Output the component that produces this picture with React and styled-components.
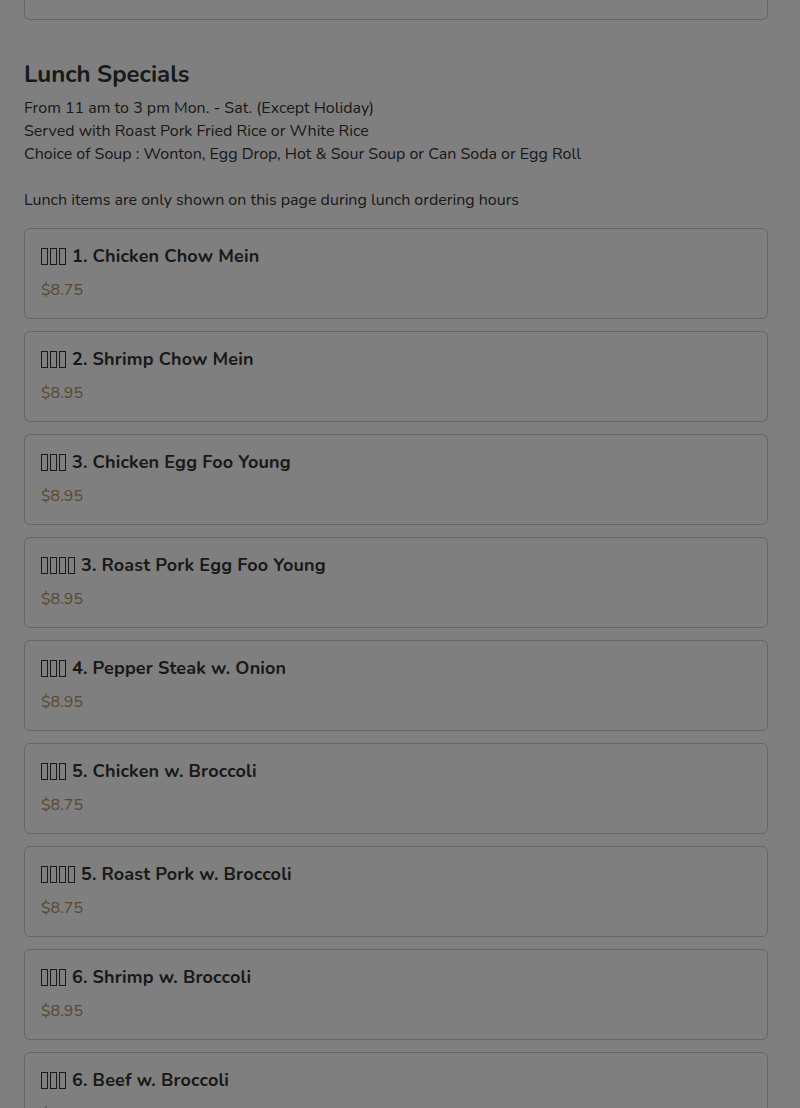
import React from "react";
import styled, { createGlobalStyle } from "styled-components";

const GlobalStyle = createGlobalStyle`
  html, body {
    margin: 0;
    padding: 0;
    background: #ffffff;
    font-family: "Nunito", "Lato", "Noto Sans", sans-serif;
    color: #333333;
  }
`;

const items = [
  { boxes: 3, name: "1. Chicken Chow Mein", price: "$8.75" },
  { boxes: 3, name: "2. Shrimp Chow Mein", price: "$8.95" },
  { boxes: 3, name: "3. Chicken Egg Foo Young", price: "$8.95" },
  { boxes: 4, name: "3. Roast Pork Egg Foo Young", price: "$8.95" },
  { boxes: 3, name: "4. Pepper Steak w. Onion", price: "$8.95" },
  { boxes: 3, name: "5. Chicken w. Broccoli", price: "$8.75" },
  { boxes: 4, name: "5. Roast Pork w. Broccoli", price: "$8.75" },
  { boxes: 3, name: "6. Shrimp w. Broccoli", price: "$8.95" },
  { boxes: 3, name: "6. Beef w. Broccoli", price: "$8.95" },
];

const App = () => {
  return (
    <>
      <GlobalStyle />
      <StyledPage>
        <PrevCard />
        <Section>
          <Heading>Lunch Specials</Heading>
          <Notes>
            From 11 am to 3 pm Mon. - Sat. (Except Holiday)
            <br />
            Served with Roast Pork Fried Rice or White Rice
            <br />
            Choice of Soup : Wonton, Egg Drop, Hot &amp; Sour Soup or Can Soda or
            Egg Roll
            <br />
            <br />
            Lunch items are only shown on this page during lunch ordering hours
          </Notes>
          <ItemList>
            {items.map((item, i) => (
              <ItemCard key={i}>
                <ItemName>
                  <Tofu>
                    {Array.from({ length: item.boxes }).map((_, j) => (
                      <TofuBox key={j} />
                    ))}
                  </Tofu>
                  {item.name}
                </ItemName>
                <Price>{item.price}</Price>
              </ItemCard>
            ))}
          </ItemList>
        </Section>
      </StyledPage>
      <Overlay />
    </>
  );
};

const StyledPage = styled.div`
  padding: 0 32px 0 24px;
`;

const PrevCard = styled.div`
  height: 19px;
  border: 1px solid #cccccc;
  border-top: none;
  border-radius: 0 0 6px 6px;
`;

const Section = styled.section`
  padding-top: 40px;
`;

const Heading = styled.h2`
  margin: 0 0 8px;
  font-size: 24px;
  line-height: 29px;
  font-weight: 700;
  color: #333333;
`;

const Notes = styled.p`
  margin: 0 0 16px;
  font-size: 16px;
  line-height: 23px;
`;

const ItemList = styled.div`
  display: flex;
  flex-direction: column;
  gap: 12px;
`;

const ItemCard = styled.div`
  border: 1px solid #cccccc;
  border-radius: 6px;
  padding: 14px 16px 16px;
`;

const ItemName = styled.div`
  display: flex;
  align-items: center;
  font-size: 18px;
  line-height: 26px;
  font-weight: 700;
  letter-spacing: 0.15px;
  color: #333333;
`;

const Tofu = styled.span`
  display: inline-flex;
  gap: 2px;
  margin-right: 6px;
`;

const TofuBox = styled.span`
  display: inline-block;
  width: 5px;
  height: 15px;
  border: 1px solid #333333;
`;

const Price = styled.div`
  margin-top: 9px;
  font-size: 16px;
  line-height: 24px;
  color: #b4925a;
`;

const Overlay = styled.div`
  position: fixed;
  inset: 0;
  background: rgba(0, 0, 0, 0.5);
`;

export default App;
